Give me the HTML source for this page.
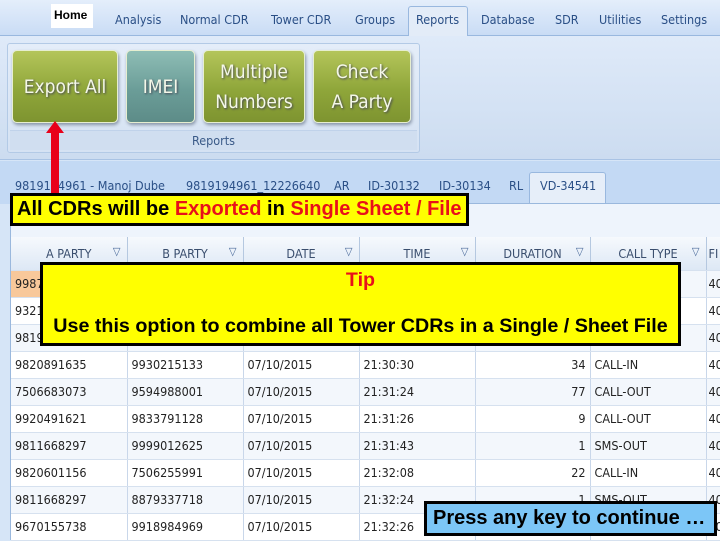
<!DOCTYPE html>
<html><head><meta charset="utf-8"><style>
*{margin:0;padding:0;box-sizing:border-box}
body{width:720px;height:540px;overflow:hidden;position:relative;background:#d6e5f7;font-family:"DejaVu Sans Condensed","DejaVu Sans","Liberation Sans",sans-serif;}
.abs{position:absolute}
.top{left:0;top:0;width:720px;height:36px;background:linear-gradient(#e4eefb,#c9dcf5);border-bottom:1px solid #99b8df}
.tab{position:absolute;top:12px;font-size:12.5px;color:#2a4f86}
.ribbon{left:0;top:36px;width:720px;height:124px;background:linear-gradient(#dfeaf9,#ccdcf0);border-bottom:1px solid #a9c3e4}
.panel{left:7px;top:43px;width:413px;height:110px;border:1px solid #b3cae6;border-radius:3px;background:linear-gradient(#e4edf9,#d5e2f3)}
.btn{position:absolute;top:50px;height:73px;border-radius:5px;color:#f4f7e8;font-size:19px;text-align:center;display:flex;align-items:center;justify-content:center;line-height:30px;text-shadow:1px 1px 2px #445;box-shadow:1px 2px 3px #8895a8;border:1px solid #e6eed0;font-family:"DejaVu Sans Condensed","Liberation Sans",sans-serif}
.g{background:linear-gradient(#b4c55a,#8fa63a 55%,#7e9430)}
.t{background:linear-gradient(#8ebdb5,#6b9d98 55%,#5d8c88)}
.lbl{left:10px;top:130px;width:407px;height:20px;background:#d0def0;border-top:1px solid #c0d2ea;font-size:12.5px;color:#3a5a88;text-align:center;line-height:20px}
.stab{position:absolute;top:178px;font-size:12.5px;color:#2a4f86}
.grid{left:10px;top:203px;width:710px;height:337px;background:#eef4fc;border-left:1px solid #9ab8dd;border-top:1px solid #9ab8dd}
table{position:absolute;left:11px;top:237px;width:710px;border-collapse:collapse;font-size:12.5px;color:#222;table-layout:fixed}
td,th{border-right:1px solid #c9d7ea;border-bottom:1px solid #d6e1ef;height:27px;padding:0 4px;white-space:nowrap;overflow:hidden}
th{height:33px;font-weight:normal;background:linear-gradient(#f6f9fd,#dde8f5);color:#3a4e6e;border-right:1px solid #b5c8e0;text-align:center;position:relative}
th span{position:absolute;right:6px;top:8px;color:#4a6a9a;font-size:11px}
tr:nth-child(odd) td{background:#fff}
tr:nth-child(even) td{background:#f3f7fc}
.r{text-align:right}
.yb{background:#ffff00;border:3px solid #000;font-family:"Liberation Sans",sans-serif;font-weight:bold}
</style></head><body>
<div class="abs top"></div>
<div class="abs" style="left:51px;top:4px;width:42px;height:24px;background:#fff;font-size:12px;font-weight:bold;font-family:'Liberation Sans',sans-serif;padding:4px 0 0 3px">Home</div>
<div class="tab" style="left:115px">Analysis</div>
<div class="tab" style="left:180px">Normal CDR</div>
<div class="tab" style="left:271px">Tower CDR</div>
<div class="tab" style="left:355px">Groups</div>
<div class="abs" style="left:408px;top:6px;width:60px;height:32px;background:#e3ecf8;border:1px solid #99b8df;border-bottom:none;border-radius:3px 3px 0 0"></div>
<div class="tab" style="left:416px">Reports</div>
<div class="tab" style="left:481px">Database</div>
<div class="tab" style="left:555px">SDR</div>
<div class="tab" style="left:599px">Utilities</div>
<div class="tab" style="left:661px">Settings</div>
<div class="abs ribbon"></div>
<div class="abs panel"></div>
<div class="btn g" style="left:12px;width:106px">Export All</div>
<div class="btn t" style="left:126px;width:69px">IMEI</div>
<div class="btn g" style="left:203px;width:102px">Multiple<br>Numbers</div>
<div class="btn g" style="left:313px;width:98px">Check<br>A Party</div>
<div class="abs lbl">Reports</div>
<div class="abs" style="left:0;top:161px;width:720px;height:43px;background:#c3d9f4"></div>
<div class="stab" style="left:15px">9819194961 - Manoj Dube</div>
<div class="stab" style="left:186px">9819194961_12226640</div>
<div class="stab" style="left:334px">AR</div>
<div class="stab" style="left:368px">ID-30132</div>
<div class="stab" style="left:439px">ID-30134</div>
<div class="stab" style="left:509px">RL</div>
<div class="abs" style="left:529px;top:172px;width:77px;height:32px;background:#e6eef9;border:1px solid #99b8df;border-bottom:none;border-radius:3px 3px 0 0"></div>
<div class="stab" style="left:540px">VD-34541</div>
<div class="abs grid"></div>
<table>
<colgroup><col style="width:116px"><col style="width:116px"><col style="width:116px"><col style="width:116px"><col style="width:115px"><col style="width:116px"><col style="width:15px"></colgroup>
<tr><th>A PARTY<span>▽</span></th><th>B PARTY<span>▽</span></th><th>DATE<span>▽</span></th><th>TIME<span>▽</span></th><th>DURATION<span>▽</span></th><th>CALL TYPE<span>▽</span></th><th style="text-align:left;padding:0 2px">FI</th></tr>
<tr><td style="background:#f8c89a">9987</td><td></td><td></td><td></td><td></td><td></td><td style="padding:0 2px">40</td></tr>
<tr><td>9321</td><td></td><td></td><td></td><td></td><td></td><td style="padding:0 2px">40</td></tr>
<tr><td>9819</td><td></td><td></td><td></td><td></td><td></td><td style="padding:0 2px">40</td></tr>
<tr><td>9820891635</td><td>9930215133</td><td>07/10/2015</td><td>21:30:30</td><td class="r">34</td><td>CALL-IN</td><td style="padding:0 2px">40</td></tr>
<tr><td>7506683073</td><td>9594988001</td><td>07/10/2015</td><td>21:31:24</td><td class="r">77</td><td>CALL-OUT</td><td style="padding:0 2px">40</td></tr>
<tr><td>9920491621</td><td>9833791128</td><td>07/10/2015</td><td>21:31:26</td><td class="r">9</td><td>CALL-OUT</td><td style="padding:0 2px">40</td></tr>
<tr><td>9811668297</td><td>9999012625</td><td>07/10/2015</td><td>21:31:43</td><td class="r">1</td><td>SMS-OUT</td><td style="padding:0 2px">40</td></tr>
<tr><td>9820601156</td><td>7506255991</td><td>07/10/2015</td><td>21:32:08</td><td class="r">22</td><td>CALL-IN</td><td style="padding:0 2px">40</td></tr>
<tr><td>9811668297</td><td>8879337718</td><td>07/10/2015</td><td>21:32:24</td><td class="r">1</td><td>SMS-OUT</td><td style="padding:0 2px">40</td></tr>
<tr><td>9670155738</td><td>9918984969</td><td>07/10/2015</td><td>21:32:26</td><td class="r"></td><td></td><td style="padding:0 2px">40</td></tr>
</table>
<div class="abs" style="left:51px;top:131px;width:8px;height:66px;background:#e8001a"></div>
<div class="abs" style="left:46px;top:121px;width:0;height:0;border-left:9px solid transparent;border-right:9px solid transparent;border-bottom:12px solid #e8001a"></div>
<div class="abs yb" style="left:10px;top:193px;width:459px;height:33px;font-size:20px;line-height:27px;padding-left:4px;white-space:nowrap">All CDRs will be <span style="color:#e8101a">Exported</span> in <span style="color:#e8101a">Single Sheet / File</span></div>
<div class="abs yb" style="left:40px;top:262px;width:641px;height:84px;font-size:19.7px;text-align:center;white-space:nowrap">
<div style="color:#e8101a;margin-top:4px">Tip</div>
<div style="margin-top:23px">Use this option to combine all Tower CDRs in a Single / Sheet File</div></div>
<div class="abs" style="left:424px;top:501px;width:293px;height:35px;background:#7cc6f7;border:3px solid #000;font-family:'Liberation Sans',sans-serif;font-weight:bold;font-size:20px;line-height:29px;padding-left:6px;white-space:nowrap">Press any key to continue …</div>
</body></html>
